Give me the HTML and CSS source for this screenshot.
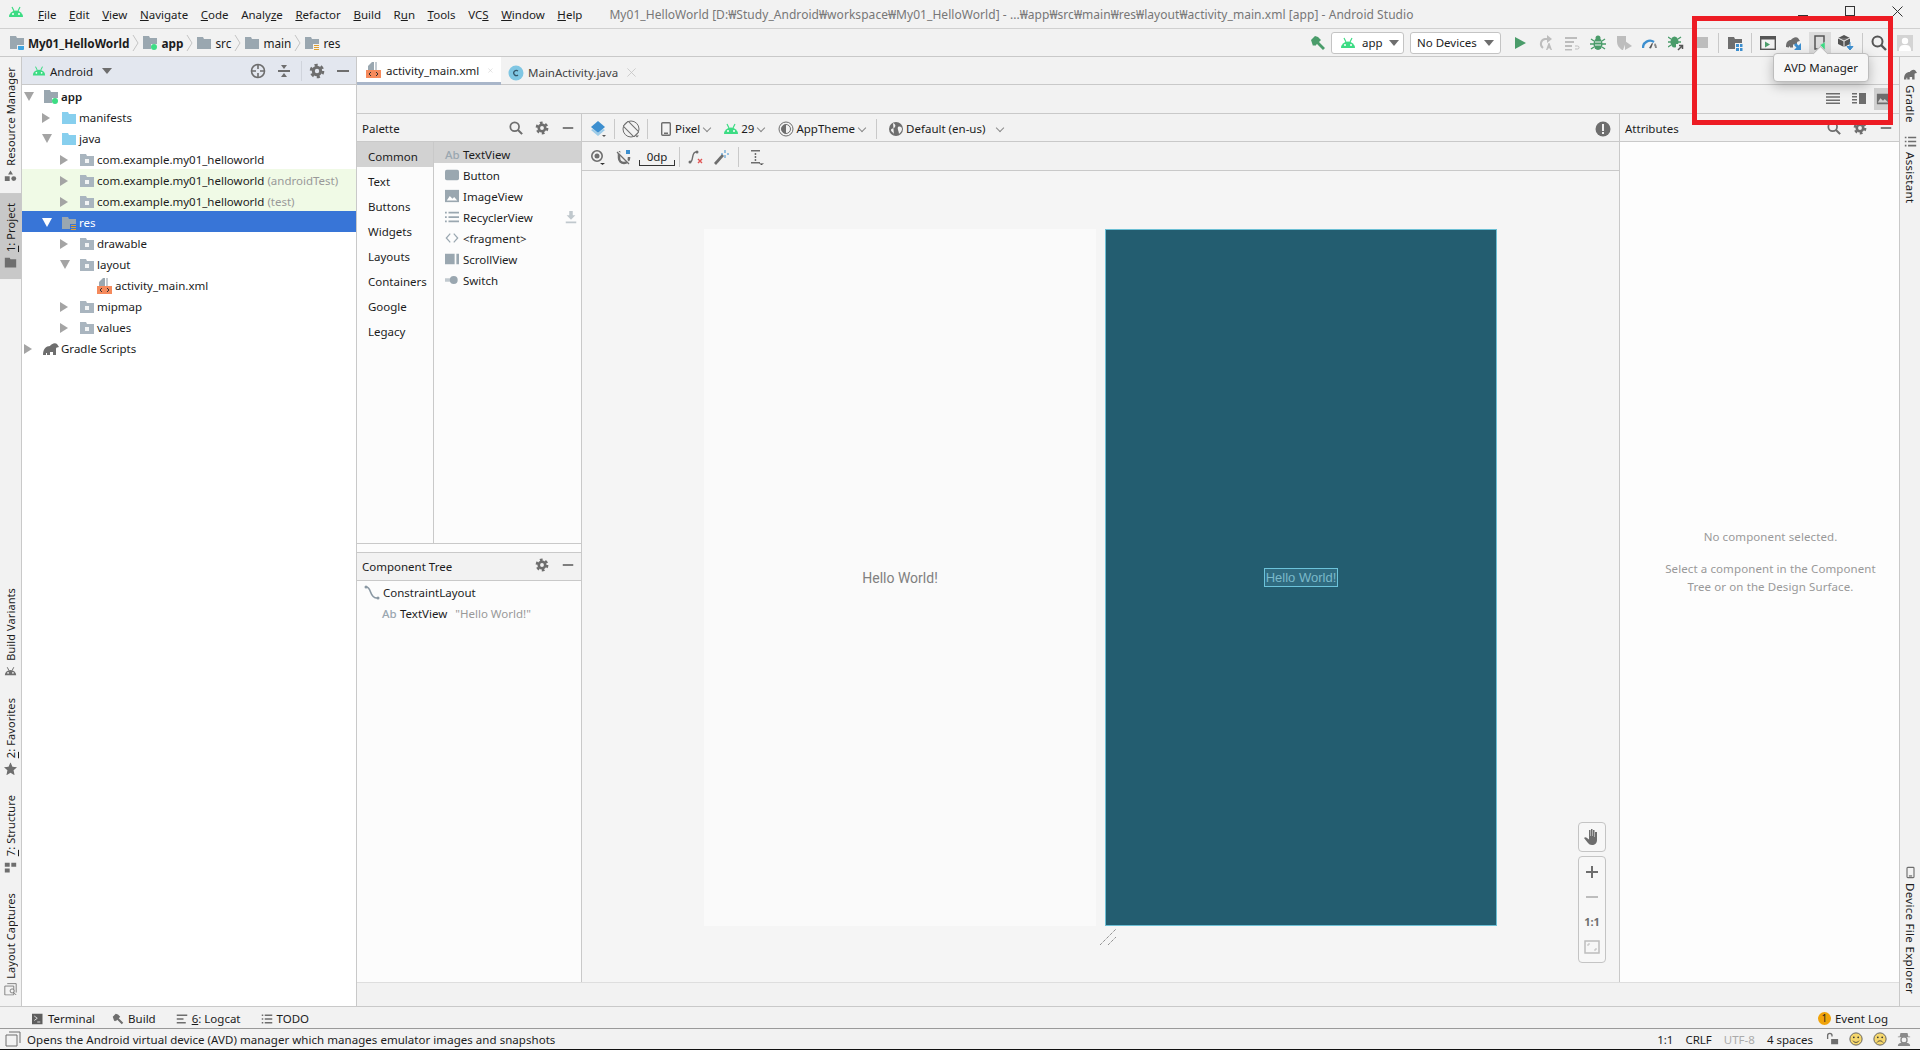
FILE: index.html
```html
<!doctype html>
<html lang="en">

<head>
    <meta charset="utf-8">
    <title>My01_HelloWorld - Android Studio</title>
    <link rel="stylesheet" href="styles.css">
</head>

<body>
    <svg class="defs" width="0" height="0">
        <symbol id="android" viewBox="0 0 16 16"><path d="M1 13a7 6.500 0 0 1 14 0z"/><path d="M4 3l2 4M12 3l-2 4" stroke="currentColor" stroke-width="1.200"/><circle cx="5" cy="10" r="1" fill="#fff"/><circle cx="11" cy="10" r="1" fill="#fff"/></symbol>
        <symbol id="folder" viewBox="0 0 16 16"><path d="M1 2h6l1 2h7v10H1z"/></symbol>
        <symbol id="module" viewBox="0 0 16 16"><path d="M1 1h6l1 2h7v6H9v5H1z" fill="#9aa7b0"/><circle cx="12" cy="12" r="3" fill="#3ddc84"/></symbol>
        <symbol id="module-blue" viewBox="0 0 16 16"><path d="M1 1h6l1 2h7v7H8v4H1z" fill="#9aa7b0"/><path d="M9 11h6v3a1 1 0 0 1-1 1h-4a1 1 0 0 1-1-1z" fill="#40a5e0"/></symbol>
        <symbol id="res-folder" viewBox="0 0 16 16"><path d="M1 2h6l1 2h7v5H9v5H1z" fill="#9aa7b0"/><path d="M10 10h5v1h-5zM10 12h5v1h-5zM10 14h5v1h-5z" fill="#e0a030"/></symbol>
        <symbol id="package" viewBox="0 0 16 16"><path d="M1 2h6l1 2h7v10H1z" fill="#a9b5bf"/><rect x="6" y="7" width="4" height="4" fill="#f2f4f5"/></symbol>
        <symbol id="xml" viewBox="0 0 16 16"><path d="M6 0h2v8H2V4z" fill="#9aa7b0"/><path d="M9 0h2v8H9z" fill="#c4cbd1"/><rect y="8" width="15" height="8" fill="#f58a5c"/><path d="M5 10l-2 2 2 2M10 10l2 2-2 2" stroke="#333" fill="none"/></symbol>
        <symbol id="class" viewBox="0 0 16 16"><circle cx="8" cy="8" r="7.500" fill="#7fc6e3"/><path d="M10 6a2.600 2.600 0 1 0 0 4" stroke="#33566b" stroke-width="1.200" fill="none"/></symbol>
        <symbol id="gradle" viewBox="0 0 16 16"><path d="M0 14c0-6 3-9 7-9 1-2 5-4 7-2l2 3-2 .5c-1 0-1 1-1 2v5.500h-3v-3H7v3H4v-2H3v2z"/></symbol>
        <symbol id="gear" viewBox="0 0 16 16"><circle cx="8" cy="8" r="3.700" fill="none" stroke="currentColor" stroke-width="3"/><circle cx="8" cy="8" r="6" fill="none" stroke="currentColor" stroke-width="2.600" stroke-dasharray="3.140 3.140"/></symbol>
        <symbol id="minus" viewBox="0 0 16 16"><rect x="2" y="7" width="12" height="2"/></symbol>
        <symbol id="search" viewBox="0 0 16 16"><circle cx="6.500" cy="6.500" r="5" fill="none" stroke="currentColor" stroke-width="2"/><path d="M10 10l5 5" stroke="currentColor" stroke-width="2.400"/></symbol>
        <symbol id="target" viewBox="0 0 16 16"><circle cx="8" cy="8" r="6.500" fill="none" stroke="currentColor" stroke-width="1.600"/><path d="M8 1v5M8 10v5M1 8h5M10 8h5" stroke="currentColor" stroke-width="1.600"/></symbol>
        <symbol id="collapse" viewBox="0 0 16 16"><path d="M2 7h12v2H2z"/><path d="M8 6L5 2h6zM8 10l3 4H5z"/></symbol>
        <symbol id="crumb" viewBox="0 0 7 16"><path d="M1 0l5 8-5 8" fill="none" stroke="#c4c4c4"/></symbol>
        <symbol id="cross" viewBox="0 0 11 11"><path d="M.5.5l10 10M10.500.5l-10 10" fill="none" stroke="currentColor"/></symbol>
        <symbol id="hammer" viewBox="0 0 16 16"><path d="M1 5l4-4 3 1 3 3-2 2 6 6-2 2-6-6-2 2-1-1-1 1z"/></symbol>
        <symbol id="run" viewBox="0 0 16 16"><path d="M3 2l11 6-11 6z"/></symbol>
        <symbol id="rerun" viewBox="0 0 16 16"><path d="M10 4H7a5 5 0 0 0-2 9" fill="none" stroke="currentColor" stroke-width="2"/><path d="M9 0l5 4-5 4z"/><path d="M8 15l2.500-7h1l2.500 7h-1.500l-.5-1.500h-2L9.500 15z"/></symbol>
        <symbol id="apply" viewBox="0 0 16 16"><path d="M1 2h12v2H1zM1 6h9v2H1zM1 10h7v2H1zM1 14h7v1.500H1z"/><path d="M11 11h2.500a1.500 1.500 0 0 1 0 3H11" fill="none" stroke="currentColor"/></symbol>
        <symbol id="bug" viewBox="0 0 16 16"><ellipse cx="8" cy="9" rx="4.500" ry="6"/><circle cx="8" cy="3" r="2.500"/><path d="M1 4l3 2M15 4l-3 2M0 9h4M16 9h-4M1 14l3-2M15 14l-3-2" stroke="currentColor" stroke-width="1.400"/><path d="M5 7h6M5 10h6" stroke="#f2f2f2"/></symbol>
        <symbol id="coverage" viewBox="0 0 16 16"><path d="M1 1h9v6l-3 8-1 0C3 13 1 10 1 7z"/><path d="M9 6l7 5-7 4z" fill="#bdbdbd"/></symbol>
        <symbol id="profiler" viewBox="0 0 16 16"><path d="M1 13a7 7 0 0 1 11-6" fill="none" stroke="#3d8fcf" stroke-width="2.400"/><path d="M7 13l3-5 1 .5-2 5z" fill="#555"/><path d="M13 8a7 7 0 0 1 2 5h-2a5 5 0 0 0-1-3z" fill="#888"/></symbol>
        <symbol id="attach" viewBox="0 0 16 16"><ellipse cx="6.500" cy="7" rx="4" ry="5.500" fill="#4a9c6a"/><path d="M0 2l3 2M13 2l-3 2M0 7h3M13 7h-3M0 12l3-2" stroke="#4a9c6a" stroke-width="1.400"/><path d="M8 9h8v7H8z" fill="#f2f2f2"/><path d="M10 15l4-4M11 10.500h3.500V14" stroke="#555" stroke-width="1.500" fill="none"/></symbol>
        <symbol id="structure" viewBox="0 0 16 16"><path d="M1 2h6l1 2h7v4H8v6H1z" fill="#6e6e6e"/><path d="M9 9h3v3H9zM13 9h2.500v3H13zM9 13h3v3H9zM13 13h2.500v3H13z" fill="#3d8fcf"/></symbol>
        <symbol id="terminal" viewBox="0 0 16 16"><rect x=".700" y="1.700" width="14.600" height="12.600" fill="none" stroke="#555" stroke-width="1.400"/><rect x="1" y="2" width="14" height="2.500" fill="#555"/><path d="M5 6.500l5 3-5 3z" fill="#4a9c6a"/></symbol>
        <symbol id="gradle-sync" viewBox="0 0 16 16"><path d="M0 12c0-5 2-7 5-7 1-2 5-4 7-2l2 3-2 .5c-1 0-1 1-1 2v1H7v3H4v-1H3v1z" fill="#6e6e6e"/><path d="M15 8v7H8l2.500-2.500L8 10l2-2 2.500 2.500z" fill="#3d8fcf"/></symbol>
        <symbol id="avd" viewBox="0 0 16 16"><path d="M3 1h9v13H3z" fill="none" stroke="#555" stroke-width="1.500"/><path d="M8 10l5-3 0 8z" fill="#3ddc84" stroke="#d2d2d2" stroke-width=".5"/></symbol>
        <symbol id="sdk" viewBox="0 0 16 16"><path d="M6 0l6 3v6l-6 3-6-3V3z" fill="#555"/><path d="M6 6v6M0 3l6 3 6-3" stroke="#f2f2f2"/><path d="M12 7v5M9 11.500l3 3.500 3-3.500z" fill="#3d8fcf" stroke="#3d8fcf"/></symbol>
        <symbol id="user" viewBox="0 0 16 16"><rect width="16" height="16" fill="#d4d4d4"/><circle cx="8" cy="6" r="3.200" fill="#fff"/><path d="M2 16c0-5 2-6 6-6s6 1 6 6z" fill="#fff"/></symbol>
        <symbol id="list" viewBox="0 0 16 16"><path d="M1 2h14v1.500H1zM1 5.200h14v1.500H1zM1 8.400h14v1.500H1zM1 11.600h14v1.500H1z"/></symbol>
        <symbol id="split" viewBox="0 0 16 16"><path d="M1 2h5v1.500H1zM1 5h5v1.500H1zM1 8h5v1.500H1zM1 11h5v1.500H1zM8 2h7v11H8z"/></symbol>
        <symbol id="picture" viewBox="0 0 16 16"><path d="M1 2h14v12H1z"/><path d="M2 12l3-5 3 3 2-2 4 4z" fill="#d0d0d0"/></symbol>
        <symbol id="button-w" viewBox="0 0 16 16"><rect y="2" width="16" height="12" rx="2"/></symbol>
        <symbol id="image-w" viewBox="0 0 16 16"><rect y="1" width="16" height="14"/><path d="M2 13l3.500-5 3 3 2-2 3.500 4z" fill="#fff"/></symbol>
        <symbol id="recycler" viewBox="0 0 16 16"><path d="M0 2h2v2H0zM4 2h12v2H4zM0 7h2v2H0zM4 7h12v2H4zM0 12h2v2H0zM4 12h12v2H4z"/></symbol>
        <symbol id="code" viewBox="0 0 16 16"><path d="M6 3L1.500 8 6 13M10 3l4.500 5-4.500 5" fill="none" stroke="currentColor" stroke-width="1.400"/></symbol>
        <symbol id="scroll" viewBox="0 0 16 16"><path d="M0 2h11v12H0zM13 2h3v12h-3z"/></symbol>
        <symbol id="switch" viewBox="0 0 16 16"><path d="M0 6h7v4H0z" opacity=".6"/><circle cx="10" cy="8" r="4.500"/></symbol>
        <symbol id="download" viewBox="0 0 16 16"><path d="M6 1h4v5h3l-5 5-5-5h3zM2 13h12v2H2z"/></symbol>
        <symbol id="layers" viewBox="0 0 16 16"><path d="M8 0l7 6-7 6-7-6z" fill="#3d8fcf"/><path d="M1 9l7 6 7-6-2-1-5 4-5-4z" fill="#9ccbe8"/><path d="M12 14h4l-2 2z" fill="#555"/></symbol>
        <symbol id="rotate" viewBox="0 0 18 18"><circle cx="9" cy="9" r="8" fill="none" stroke="currentColor"/><rect x="5.500" y="1.500" width="7" height="15" rx="1" fill="#f2f2f2" stroke="currentColor" transform="rotate(-45 9 9)"/><path d="M13 15.500h4l-2 2z"/></symbol>
        <symbol id="phone" viewBox="0 0 16 16"><rect x="3.700" y="1.700" width="8.600" height="12.600" rx="1" fill="none" stroke="currentColor" stroke-width="1.400"/><rect x="6" y="11.500" width="4" height="1.500"/></symbol>
        <symbol id="theme" viewBox="0 0 16 16"><circle cx="8" cy="8" r="7" fill="none" stroke="currentColor"/><circle cx="8" cy="8" r="4.500" fill="none" stroke="currentColor"/><path d="M8 3.500a4.500 4.500 0 0 0 0 9z"/></symbol>
        <symbol id="globe" viewBox="0 0 16 16"><circle cx="8" cy="8" r="7"/><path d="M5 2c2 1 3 2 2 4S3 7 3 9s3 2 3 5M10 6c2-1 4 0 4 2s-2 4-3 5c0-3-2-5-1-7z" fill="#f2f2f2"/></symbol>
        <symbol id="warn" viewBox="0 0 16 16"><circle cx="8" cy="8" r="7.500"/><rect x="7" y="3" width="2" height="7" fill="#f2f2f2"/><rect x="7" y="11" width="2" height="2" fill="#f2f2f2"/></symbol>
        <symbol id="eye" viewBox="0 0 16 16"><circle cx="7" cy="7" r="5.200" fill="none" stroke="currentColor" stroke-width="1.600"/><circle cx="7" cy="7" r="2.500"/><path d="M10 14h5l-2.500 2z" fill="#333"/></symbol>
        <symbol id="magnet" viewBox="0 0 16 16"><path d="M3 2v7a5 5 0 0 0 10 0V8" fill="none" stroke="currentColor" stroke-width="2.500"/><rect x="10" y="1" width="4" height="4" fill="#3d8fcf"/><path d="M1 2l13 13" stroke="#f2f2f2" stroke-width="2"/><path d="M1 3l12 12" stroke="currentColor" stroke-width="1.200"/></symbol>
        <symbol id="constraint" viewBox="0 0 16 16"><path d="M3 13c4 0 1-10 6-10" fill="none" stroke="currentColor" stroke-width="1.400"/><circle cx="3" cy="13" r="1.500"/><circle cx="10" cy="3" r="1.500"/><path d="M11 10l4 4M15 10l-4 4" stroke="#e05555" stroke-width="1.400"/></symbol>
        <symbol id="constraint-layout" viewBox="0 0 16 16"><path d="M2 2c6 0 3 11 11 11" fill="none" stroke="currentColor" stroke-width="1.600"/><circle cx="2" cy="2" r="1.500"/><circle cx="14" cy="13" r="1.500"/></symbol>
        <symbol id="wand" viewBox="0 0 16 16"><path d="M1 14l8-9 2 2-8 9z"/><path d="M12 1v3M12 6v3M8 5h2M14 5h2" stroke="#3d8fcf"/></symbol>
        <symbol id="guide" viewBox="0 0 16 16"><path d="M2 1h9v1.500H2zM5.700 4h1.500v2H5.700zM5.700 7h1.500v2H5.700zM5.700 10h1.500v2H5.700zM2 13h9v1.500H2z"/><path d="M10 14.500h5l-2.500 1.500z" fill="#333"/></symbol>
        <symbol id="resource" viewBox="0 0 16 16"><path d="M8 1l3 5H5zM1 8h6v6H1z"/><circle cx="12" cy="11" r="3"/></symbol>
        <symbol id="star" viewBox="0 0 16 16"><path d="M8 0l2.400 5.400 5.600.6-4.200 3.800L13 16l-5-3-5 3 1.200-6.200L0 6l5.600-.6z"/></symbol>
        <symbol id="blocks" viewBox="0 0 16 16"><path d="M1 3h6v5H1zM9 3h6v5H9zM1 10h6v5H1z"/></symbol>
        <symbol id="capture" viewBox="0 0 16 16"><path d="M4 1h11v11M1 4h11v11H1z" fill="none" stroke="currentColor"/><circle cx="10" cy="10" r="2.500" fill="#f2f2f2" stroke="currentColor"/><path d="M12 12l3 3" stroke="currentColor"/></symbol>
        <symbol id="tool-term" viewBox="0 0 16 16"><rect y="1" width="14" height="14" fill="#5e5e5e"/><path d="M3 4l4 3-4 3M7 12h4" stroke="#fff" fill="none"/></symbol>
        <symbol id="logcat" viewBox="0 0 16 16"><path d="M1 2h14v2H1zM1 7h9v2H1zM1 12h12v2H1z"/></symbol>
        <symbol id="todo" viewBox="0 0 16 16"><path d="M1 2h2v2H1zM5 2h10v2H5zM1 7h2v2H1zM5 7h10v2H5zM1 12h2v2H1zM5 12h10v2H5z"/></symbol>
        <symbol id="window" viewBox="0 0 16 16"><path d="M4 1h11v11M1 4h11v11H1z" fill="none" stroke="currentColor"/></symbol>
        <symbol id="lock" viewBox="0 0 16 16"><rect x="7" y="8" width="8" height="6"/><path d="M3 8V4a2.500 2.500 0 0 1 5 0v1" fill="none" stroke="currentColor" stroke-width="1.500"/></symbol>
        <symbol id="smile" viewBox="0 0 16 16"><circle cx="8" cy="8" r="7" fill="#f5d76e" stroke="#555"/><circle cx="5.500" cy="6" r="1" fill="#333"/><circle cx="10.500" cy="6" r="1" fill="#333"/><path d="M4.500 10c2 2.500 5 2.500 7 0" fill="none" stroke="#333"/></symbol>
        <symbol id="sad" viewBox="0 0 16 16"><circle cx="8" cy="8" r="7" fill="#f5d76e" stroke="#555"/><circle cx="5.500" cy="6" r="1" fill="#333"/><circle cx="10.500" cy="6" r="1" fill="#333"/><path d="M4.500 12c2-2.500 5-2.500 7 0" fill="none" stroke="#333"/></symbol>
        <symbol id="hector" viewBox="0 0 16 16"><path d="M4 1h8l1 4h2v1H1V5h2z"/><circle cx="8" cy="9" r="3.500" fill="none" stroke="currentColor" stroke-width="1.500"/><path d="M1 16c0-3 3-4 7-4s7 1 7 4z"/></symbol>
        <symbol id="hand" viewBox="0 0 16 16"><path d="M5 1h1.500v6H7V0h1.500v7H9V1h1.500v7h.5V3h2v8c0 3-2 5-5 5-2 0-3-1-4-2L0 9c1-1 2-1 3 0l2 1.500z"/></symbol>
        <symbol id="plus" viewBox="0 0 16 16"><path d="M7 2h2v5h5v2H9v5H7V9H2V7h5z"/></symbol>
        <symbol id="fit" viewBox="0 0 16 16"><rect x="1" y="2" width="14" height="12" fill="none" stroke="currentColor" stroke-width="1.500"/><path d="M4 7V5h2M12 9v2h-2" fill="none" stroke="currentColor"/></symbol>
    </svg>

    <div class="app">
        <!-- title bar -->
        <div class="titlebar">
            <svg class="ic logo"><use href="#android"/></svg>
            <div class="menu">
                <span><u>F</u>ile</span><span><u>E</u>dit</span><span><u>V</u>iew</span><span><u>N</u>avigate</span><span><u>C</u>ode</span><span>Analy<u>z</u>e</span><span><u>R</u>efactor</span><span><u>B</u>uild</span><span>R<u>u</u>n</span><span><u>T</u>ools</span><span>VC<u>S</u></span><span><u>W</u>indow</span><span><u>H</u>elp</span>
            </div>
            <div class="wintitle">My01_HelloWorld [D:₩Study_Android₩workspace₩My01_HelloWorld] - ...₩app₩src₩main₩res₩layout₩activity_main.xml [app] - Android Studio</div>
            <div class="winctl">
                <span class="win-min"></span>
                <span class="win-max"></span>
                <svg class="win-close"><use href="#cross"/></svg>
            </div>
        </div>

        <!-- breadcrumbs + main toolbar -->
        <div class="navbar">
            <div class="crumbs">
                <svg class="ic"><use href="#module-blue"/></svg><b>My01_HelloWorld</b><svg class="crumb-sep"><use href="#crumb"/></svg>
                <svg class="ic"><use href="#module"/></svg><b>app</b><svg class="crumb-sep"><use href="#crumb"/></svg>
                <svg class="ic c-folder"><use href="#folder"/></svg><span>src</span><svg class="crumb-sep"><use href="#crumb"/></svg>
                <svg class="ic c-folder"><use href="#folder"/></svg><span>main</span><svg class="crumb-sep"><use href="#crumb"/></svg>
                <svg class="ic"><use href="#res-folder"/></svg><span>res</span>
            </div>
            <div class="tools">
                <div class="tb c-green"><svg class="ic"><use href="#hammer"/></svg></div>
                <div class="combo combo-app"><svg class="ic c-android"><use href="#android"/></svg><span>app</span><i class="caret"></i></div>
                <div class="combo combo-dev"><span>No Devices</span><i class="caret"></i></div>
                <div class="tb c-green"><svg class="ic"><use href="#run"/></svg></div>
                <div class="tb c-off"><svg class="ic"><use href="#rerun"/></svg></div>
                <div class="tb c-off"><svg class="ic"><use href="#apply"/></svg></div>
                <div class="tb c-green"><svg class="ic"><use href="#bug"/></svg></div>
                <div class="tb c-off"><svg class="ic"><use href="#coverage"/></svg></div>
                <div class="tb"><svg class="ic"><use href="#profiler"/></svg></div>
                <div class="tb"><svg class="ic"><use href="#attach"/></svg></div>
                <div class="tb"><i class="stop"></i></div>
                <i class="vsep"></i>
                <div class="tb"><svg class="ic"><use href="#structure"/></svg></div>
                <i class="vsep"></i>
                <div class="tb"><svg class="ic"><use href="#terminal"/></svg></div>
                <div class="tb"><svg class="ic"><use href="#gradle-sync"/></svg></div>
                <div class="tb tb-on"><svg class="ic"><use href="#avd"/></svg></div>
                <div class="tb"><svg class="ic"><use href="#sdk"/></svg></div>
                <i class="vsep"></i>
                <div class="tb c-dark"><svg class="ic"><use href="#search"/></svg></div>
                <div class="tb"><svg class="ic"><use href="#user"/></svg></div>
            </div>
        </div>

        <div class="workbench">
            <!-- left tool window stripe -->
            <div class="stripe stripe-left">
                <div class="stripe-group">
                    <div class="sbtn"><svg class="ic"><use href="#resource"/></svg><span>Resource Manager</span></div>
                    <div class="sbtn sbtn-on"><svg class="ic"><use href="#folder"/></svg><span><u>1</u>: Project</span></div>
                </div>
                <div class="stripe-group">
                    <div class="sbtn"><svg class="ic"><use href="#android"/></svg><span>Build Variants</span></div>
                    <div class="sbtn"><svg class="ic"><use href="#star"/></svg><span><u>2</u>: Favorites</span></div>
                    <div class="sbtn"><svg class="ic"><use href="#blocks"/></svg><span><u>7</u>: Structure</span></div>
                    <div class="sbtn"><svg class="ic"><use href="#capture"/></svg><span>Layout Captures</span></div>
                </div>
            </div>

            <!-- project tree -->
            <div class="project">
                <div class="project-head">
                    <svg class="ic c-android"><use href="#android"/></svg>
                    <span class="project-view">Android</span>
                    <i class="caret"></i>
                    <div class="head-icons">
                        <svg class="ic"><use href="#target"/></svg>
                        <svg class="ic"><use href="#collapse"/></svg>
                        <i class="head-sep"></i>
                        <svg class="ic"><use href="#gear"/></svg>
                        <svg class="ic"><use href="#minus"/></svg>
                    </div>
                </div>
                <div class="tree">
                    <div class="row d0"><i class="tw open"></i><svg class="ic"><use href="#module"/></svg><b>app</b></div>
                    <div class="row d1"><i class="tw"></i><svg class="ic c-src"><use href="#folder"/></svg>manifests</div>
                    <div class="row d1"><i class="tw open"></i><svg class="ic c-src"><use href="#folder"/></svg>java</div>
                    <div class="row d2"><i class="tw"></i><svg class="ic"><use href="#package"/></svg>com.example.my01_helloworld</div>
                    <div class="row d2 row-test"><i class="tw"></i><svg class="ic"><use href="#package"/></svg>com.example.my01_helloworld <em>(androidTest)</em></div>
                    <div class="row d2 row-test"><i class="tw"></i><svg class="ic"><use href="#package"/></svg>com.example.my01_helloworld <em>(test)</em></div>
                    <div class="row d1 row-sel"><i class="tw open"></i><svg class="ic"><use href="#res-folder"/></svg>res</div>
                    <div class="row d2"><i class="tw"></i><svg class="ic"><use href="#package"/></svg>drawable</div>
                    <div class="row d2"><i class="tw open"></i><svg class="ic"><use href="#package"/></svg>layout</div>
                    <div class="row d3"><i class="tw none"></i><svg class="ic"><use href="#xml"/></svg>activity_main.xml</div>
                    <div class="row d2"><i class="tw"></i><svg class="ic"><use href="#package"/></svg>mipmap</div>
                    <div class="row d2"><i class="tw"></i><svg class="ic"><use href="#package"/></svg>values</div>
                    <div class="row d0"><i class="tw"></i><svg class="ic c-gradle"><use href="#gradle"/></svg>Gradle Scripts</div>
                </div>
            </div>

            <!-- editor -->
            <div class="editor">
                <div class="tabs">
                    <div class="tab tab-on"><svg class="ic"><use href="#xml"/></svg><span>activity_main.xml</span><svg class="tab-x"><use href="#cross"/></svg></div>
                    <div class="tab"><svg class="ic"><use href="#class"/></svg><span>MainActivity.java</span><svg class="tab-x"><use href="#cross"/></svg></div>
                </div>
                <div class="viewbar">
                    <div class="vb"><svg class="ic"><use href="#list"/></svg></div>
                    <div class="vb"><svg class="ic"><use href="#split"/></svg></div>
                    <div class="vb vb-on"><svg class="ic"><use href="#picture"/></svg></div>
                </div>

                <div class="designer">
                    <!-- palette and component tree -->
                    <div class="sidecol">
                        <div class="palette">
                            <div class="panel-head">
                                <span>Palette</span>
                                <div class="head-icons">
                                    <svg class="ic"><use href="#search"/></svg>
                                    <svg class="ic"><use href="#gear"/></svg>
                                    <svg class="ic"><use href="#minus"/></svg>
                                </div>
                            </div>
                            <div class="palette-body">
                                <div class="cats">
                                    <div class="cat cat-on">Common</div>
                                    <div class="cat">Text</div>
                                    <div class="cat">Buttons</div>
                                    <div class="cat">Widgets</div>
                                    <div class="cat">Layouts</div>
                                    <div class="cat">Containers</div>
                                    <div class="cat">Google</div>
                                    <div class="cat">Legacy</div>
                                </div>
                                <div class="widgets">
                                    <div class="wg wg-on"><span class="ab">Ab</span>TextView</div>
                                    <div class="wg"><svg class="ic"><use href="#button-w"/></svg>Button</div>
                                    <div class="wg"><svg class="ic"><use href="#image-w"/></svg>ImageView</div>
                                    <div class="wg"><svg class="ic"><use href="#recycler"/></svg>RecyclerView<svg class="ic wg-dl"><use href="#download"/></svg></div>
                                    <div class="wg"><svg class="ic"><use href="#code"/></svg>&lt;fragment&gt;</div>
                                    <div class="wg"><svg class="ic"><use href="#scroll"/></svg>ScrollView</div>
                                    <div class="wg"><svg class="ic"><use href="#switch"/></svg>Switch</div>
                                </div>
                            </div>
                        </div>
                        <div class="comptree">
                            <div class="panel-head">
                                <span>Component Tree</span>
                                <div class="head-icons">
                                    <svg class="ic"><use href="#gear"/></svg>
                                    <svg class="ic"><use href="#minus"/></svg>
                                </div>
                            </div>
                            <div class="comp-body">
                                <div class="comp comp-root"><svg class="ic"><use href="#constraint-layout"/></svg>ConstraintLayout</div>
                                <div class="comp comp-child"><span class="ab">Ab</span>TextView<em>"Hello World!"</em></div>
                            </div>
                        </div>
                    </div>

                    <!-- design surface -->
                    <div class="main">
                        <div class="main-tb">
                            <svg class="ic m-layers"><use href="#layers"/></svg>
                            <i class="tb-sep"></i>
                            <svg class="ic m-rotate"><use href="#rotate"/></svg>
                            <i class="tb-sep"></i>
                            <svg class="ic m-phone"><use href="#phone"/></svg><span class="m-txt">Pixel</span><i class="chev"></i>
                            <svg class="ic c-android m-api"><use href="#android"/></svg><span class="m-txt">29</span><i class="chev"></i>
                            <svg class="ic m-theme"><use href="#theme"/></svg><span class="m-txt">AppTheme</span><i class="chev"></i>
                            <i class="tb-sep m-sep-tight"></i>
                            <svg class="ic m-globe"><use href="#globe"/></svg><span class="m-txt">Default (en-us)</span><i class="chev chev-far"></i>
                            <svg class="ic m-warn"><use href="#warn"/></svg>
                        </div>
                        <div class="main-tb main-tb2">
                            <svg class="ic"><use href="#eye"/></svg>
                            <svg class="ic"><use href="#magnet"/></svg>
                            <span class="margin-box">0dp</span>
                            <i class="tb-sep"></i>
                            <svg class="ic"><use href="#constraint"/></svg>
                            <svg class="ic"><use href="#wand"/></svg>
                            <i class="tb-sep"></i>
                            <svg class="ic m-guide"><use href="#guide"/></svg>
                        </div>
                        <div class="canvas">
                            <div class="surface">Hello World!</div>
                            <div class="surface blueprint">
                                <span class="bp-text">Hello World!</span>
                                <svg class="resize" width="18" height="18"><path d="M1 17L17 1M9 17l8-8" stroke="#666" stroke-dasharray="1 1"/></svg>
                            </div>
                            <div class="zoomctl">
                                <div class="zoombox zoombox-hand"><svg class="ic"><use href="#hand"/></svg></div>
                                <div class="zoombox">
                                    <svg class="ic"><use href="#plus"/></svg>
                                    <svg class="ic c-off"><use href="#minus"/></svg>
                                    <span class="one">1:1</span>
                                    <svg class="ic c-off"><use href="#fit"/></svg>
                                </div>
                            </div>
                        </div>
                    </div>

                    <!-- attributes -->
                    <div class="attrs">
                        <div class="panel-head">
                            <span>Attributes</span>
                            <div class="head-icons">
                                <svg class="ic"><use href="#search"/></svg>
                                <svg class="ic"><use href="#gear"/></svg>
                                <svg class="ic"><use href="#minus"/></svg>
                            </div>
                        </div>
                        <div class="attrs-empty">
                            <p>No component selected.</p>
                            <p>Select a component in the Component<br>Tree or on the Design Surface.</p>
                        </div>
                    </div>
                </div>
                <div class="hstrip"></div>
            </div>

            <!-- right tool window stripe -->
            <div class="stripe stripe-right">
                <div class="stripe-group">
                    <div class="sbtn"><svg class="ic"><use href="#gradle"/></svg><span>Gradle</span></div>
                    <div class="sbtn"><svg class="ic"><use href="#todo"/></svg><span>Assistant</span></div>
                </div>
                <div class="stripe-group">
                    <div class="sbtn"><svg class="ic"><use href="#phone"/></svg><span>Device File Explorer</span></div>
                </div>
            </div>
        </div>

        <!-- tool window buttons -->
        <div class="toolbar-bottom">
            <div class="tw-btn tw-first"><svg class="ic"><use href="#tool-term"/></svg>Terminal</div>
            <div class="tw-btn"><svg class="ic"><use href="#hammer"/></svg>Build</div>
            <div class="tw-btn"><svg class="ic"><use href="#logcat"/></svg><span><u>6</u>: Logcat</span></div>
            <div class="tw-btn"><svg class="ic"><use href="#todo"/></svg>TODO</div>
            <div class="tw-btn event"><i class="badge">1</i>Event Log</div>
        </div>

        <!-- status bar -->
        <div class="statusbar">
            <svg class="ic"><use href="#window"/></svg>
            <span class="status-msg">Opens the Android virtual device (AVD) manager which manages emulator images and snapshots</span>
            <div class="status-right">
                <span>1:1</span>
                <span>CRLF</span>
                <span class="off">UTF-8</span>
                <span>4 spaces</span>
                <svg class="ic"><use href="#lock"/></svg>
                <svg class="ic"><use href="#smile"/></svg>
                <svg class="ic"><use href="#sad"/></svg>
                <svg class="ic c-off2"><use href="#hector"/></svg>
            </div>
        </div>

        <div class="tooltip">AVD Manager</div>
        <div class="redbox"></div>
    </div>
</body>

</html>
```
FILE: styles.css
```css
* {
    box-sizing: border-box;
}

html,
body {
    margin: 0;
    height: 100%;
    overflow: hidden;
}

body {
    font-family: "Noto Sans", "Open Sans", sans-serif;
    font-size: 11.5px;
    color: #1c1c1c;
    background: #f2f2f2;
}

.defs {
    position: absolute;
}

.ic {
    width: 16px;
    height: 16px;
    flex: none;
    fill: currentColor;
    color: #6e6e6e;
}

i {
    font-style: normal;
}

u {
    text-underline-offset: 1px;
}

.app {
    position: relative;
    width: 1920px;
    height: 1050px;
    display: flex;
    flex-direction: column;
}

/* colours */
.c-folder {
    color: #9aa7b0;
}

.c-src {
    color: #87cfee;
}

.c-android {
    color: #3ddc84;
}

.c-green .ic {
    color: #4a9c6a;
}

.c-off .ic,
.ic.c-off {
    color: #bdbdbd;
}

.c-dark .ic {
    color: #555;
}

.c-gradle {
    color: #6e6e6e;
}

.c-off2 {
    color: #8a8a8a;
}

/* title bar */
.titlebar {
    height: 29px;
    flex: none;
    display: flex;
    align-items: center;
    border-bottom: 1px solid #d0d0d0;
    padding-left: 8px;
}

.logo {
    color: #3ddc84;
    margin-top: -4px;
}

.menu {
    display: flex;
    gap: 12.6px;
    margin-left: 14px;
}

.wintitle {
    margin-left: 27px;
    font-size: 12px;
    letter-spacing: .05px;
    color: #777;
    white-space: nowrap;
}

.winctl {
    margin-left: auto;
    display: flex;
    align-items: center;
}

.win-min {
    width: 10px;
    height: 1px;
    background: #333;
    margin-right: 37px;
    margin-top: 2px;
}

.win-max {
    width: 10px;
    height: 10px;
    border: 1px solid #333;
    margin-right: 37px;
    margin-top: -6px;
}

.win-close {
    width: 11px;
    height: 11px;
    margin-right: 17px;
    margin-top: -5px;
    color: #333;
}

/* nav bar */
.navbar {
    height: 28px;
    flex: none;
    display: flex;
    align-items: center;
    justify-content: space-between;
    border-bottom: 1px solid #c9c9c9;
    padding: 0 2px 0 9px;
}

.crumbs {
    display: flex;
    align-items: center;
    gap: 3px;
    padding-top: 1px;
    font-size: 11.8px;
}

.crumb-sep {
    width: 7px;
    height: 16px;
    flex: none;
}

.tools {
    display: flex;
    align-items: center;
}

.tb {
    position: relative;
    width: 26px;
    height: 22px;
    display: flex;
    align-items: center;
    justify-content: center;
}

.tb-on::before {
    content: "";
    position: absolute;
    left: 2px;
    right: 2px;
    top: 0;
    bottom: 0;
    background: #dcdcdc;
}

.tb-on .ic {
    position: relative;
}

.stop {
    width: 11px;
    height: 11px;
    background: #bdbdbd;
}

.vsep {
    width: 7px;
    height: 20px;
    background: linear-gradient(#c9c9c9, #c9c9c9) center / 1px 100% no-repeat;
}

.combo {
    height: 22px;
    display: flex;
    align-items: center;
    margin-right: 6px;
    padding: 0 6px;
    background: #fff;
    border: 1px solid #c4c4c4;
    border-radius: 3px;
}

.combo-app {
    width: 73px;
    gap: 6px;
    padding-left: 8px;
}

.combo-dev {
    width: 91px;
}

.combo .caret {
    margin-left: auto;
}

.caret {
    width: 0;
    height: 0;
    border-left: 5px solid transparent;
    border-right: 5px solid transparent;
    border-top: 6px solid #6e6e6e;
}

/* workbench */
.workbench {
    flex: 1;
    min-height: 0;
    display: flex;
    border-bottom: 1px solid #c9c9c9;
}

.stripe {
    width: 22px;
    flex: none;
    display: flex;
    flex-direction: column;
    justify-content: space-between;
    background: #f2f2f2;
}

.stripe-left {
    border-right: 1px solid #c9c9c9;
}

.stripe-right {
    width: 21px;
    border-left: 1px solid #c9c9c9;
}

.stripe-group {
    display: flex;
    flex-direction: column;
}

.sbtn {
    display: flex;
    align-items: center;
    gap: 4px;
    writing-mode: vertical-rl;
    padding: 10px 0;
    font-size: 11px;
    letter-spacing: .1px;
    white-space: nowrap;
}

.sbtn .ic {
    width: 13px;
    height: 13px;
}

.stripe-left .sbtn {
    transform: rotate(180deg);
}

.stripe-left .sbtn .ic {
    transform: rotate(180deg);
}

.stripe-right .stripe-group {
    padding: 5px 0 6px;
}

.stripe-right .sbtn {
    padding: 6px 0;
    font-size: 11.5px;
    letter-spacing: .3px;
}

.sbtn-on {
    background: #c8c8c8;
}

/* project tree */
.project {
    width: 335px;
    flex: none;
    display: flex;
    flex-direction: column;
    background: #fff;
    border-right: 1px solid #c9c9c9;
}

.project-head {
    height: 28px;
    flex: none;
    display: flex;
    align-items: center;
    padding-left: 10px;
    background: #e3e7ef;
    border-bottom: 1px solid #c9c9c9;
}

.project-head > .ic {
    width: 14px;
    height: 14px;
}

.project-view {
    margin: 2px 9px 0 4px;
}

.head-icons {
    margin-left: auto;
    display: flex;
    align-items: center;
    gap: 10px;
    padding-right: 5px;
}

.head-sep {
    width: 1px;
    height: 20px;
    background: #d0d4dc;
    margin: 0 -3px 0 -1px;
}

.row {
    height: 21px;
    display: flex;
    align-items: center;
    padding-top: 2px;
    white-space: pre;
}

.row em,
.comp em {
    font-style: normal;
    color: #999;
}

.row .ic {
    margin-right: 2px;
}

.row b {
    font-weight: 600;
}

.d0 {
    padding-left: 2px;
}

.d1 {
    padding-left: 20px;
}

.d2 {
    padding-left: 38px;
}

.d3 {
    padding-left: 56px;
}

.tw {
    width: 19px;
    flex: none;
    height: 0;
    border-left: 8px solid #a4a4a4;
    border-top: 5px solid transparent;
    border-bottom: 5px solid transparent;
    border-right: 11px solid transparent;
}

.tw.open {
    border-left: 5px solid transparent;
    border-right: 5px solid transparent;
    border-top: 9px solid #a4a4a4;
    border-bottom: 0;
    width: 10px;
    margin-right: 9px;
}

.tw.none {
    border: 0;
}

.row-test {
    background: #f0fae6;
}

.row-sel {
    background: #3875d7;
    color: #fff;
}

.row-sel .tw.open {
    border-top-color: #fff;
}

/* editor */
.editor {
    flex: 1;
    min-width: 0;
    display: flex;
    flex-direction: column;
}

.tabs {
    height: 28px;
    flex: none;
    display: flex;
    border-bottom: 1px solid #c9c9c9;
}

.tab {
    height: 28px;
    display: flex;
    align-items: center;
    gap: 4px;
    padding: 3px 8px 0 7px;
}

.tab-on {
    width: 144px;
    padding: 1px 8px 0 9px;
    background: #fff;
    border-bottom: 3px solid #a9b6c9;
}

.tab span {
    color: #444;
}

.tab-on span {
    color: #1c1c1c;
}

.tab-x {
    width: 9px;
    height: 9px;
    margin-left: 5px;
    color: #c4c4c4;
}

.viewbar {
    height: 29px;
    flex: none;
    display: flex;
    align-items: center;
    justify-content: flex-end;
    gap: 4px;
    padding-right: 7px;
    border-bottom: 1px solid #c9c9c9;
}

.vb {
    width: 22px;
    height: 22px;
    display: flex;
    align-items: center;
    justify-content: center;
}

.vb-on {
    width: 18px;
    background: #d0d0d0;
}

.vb-on .ic {
    width: 14px;
}

.designer {
    flex: 1;
    min-height: 0;
    display: flex;
    border-bottom: 1px solid #dedede;
}

.panel-head {
    height: 28px;
    flex: none;
    display: flex;
    align-items: center;
    padding-left: 5px;
    background: #f2f2f2;
    border-bottom: 1px solid #c9c9c9;
}

.panel-head > span {
    padding-top: 2px;
}

.panel-head .ic {
    width: 14px;
    height: 14px;
}

.panel-head .head-icons {
    gap: 12px;
    padding-right: 6px;
}

.comptree .panel-head > span {
    padding-top: 0;
}

.comptree .head-icons {
    margin-bottom: 3px;
}

.sidecol {
    width: 225px;
    flex: none;
    display: flex;
    flex-direction: column;
    background: #fcfcfc;
    border-right: 1px solid #c9c9c9;
}

.palette {
    height: 430px;
    flex: none;
    display: flex;
    flex-direction: column;
    border-bottom: 1px solid #c9c9c9;
}

.palette-body {
    flex: 1;
    display: flex;
}

.cats {
    width: 77px;
    flex: none;
    border-right: 1px solid #c9c9c9;
}

.cat {
    height: 25px;
    display: flex;
    align-items: center;
    padding: 4px 0 0 11px;
}

.cat-on {
    background: #d2d2d2;
}

.widgets {
    flex: 1;
}

.wg {
    height: 21px;
    display: flex;
    align-items: center;
    padding: 3px 0 0 11px;
}

.wg .ic {
    width: 14px;
    height: 14px;
    margin-right: 4px;
    color: #9aa7b0;
}

.wg-on {
    background: #d2d2d2;
}

.ab {
    width: 18px;
    flex: none;
    color: #9aa7b0;
    font-weight: 500;
}

.ic.wg-dl {
    margin: 0 3px 0 auto;
    color: #c0c8cd;
}

.comptree {
    flex: 1;
    margin-top: 8px;
    display: flex;
    flex-direction: column;
    border-top: 1px solid #c9c9c9;
}

.comp {
    height: 21px;
    display: flex;
    align-items: center;
}

.comp-body {
    padding-top: 1px;
}

.comp-root {
    padding-left: 7px;
}

.comp-root .ic {
    color: #8a98a3;
    margin-right: 3px;
}

.comp-child {
    padding-left: 25px;
}

.comp-child em {
    margin-left: 8px;
}

.main {
    flex: 1;
    min-width: 0;
    display: flex;
    flex-direction: column;
}

.main-tb {
    height: 28px;
    flex: none;
    display: flex;
    align-items: center;
    padding: 2px 0 0 8px;
    border-bottom: 1px solid #c9c9c9;
}

.tb-sep {
    width: 1px;
    height: 20px;
    background: #c9c9c9;
    margin: 0 8px;
}

.m-sep-tight {
    margin-left: 3px;
}

.m-rotate {
    width: 18px;
    height: 18px;
    margin-left: -1px;
    margin-right: -1px;
}

.m-phone {
    margin-left: 2px;
}

.m-txt {
    margin-left: 2px;
}

.m-phone + .m-txt {
    margin-left: 1px;
}

.chev {
    width: 6px;
    height: 6px;
    margin: -2px 8px 0 4px;
    border-right: 1px solid #8a8a8a;
    border-bottom: 1px solid #8a8a8a;
    transform: rotate(45deg);
}

.chev-far {
    margin-left: 12px;
}

.m-api {
    margin-left: 5px;
}

.m-theme {
    margin-left: 6px;
}

.m-globe {
    margin-left: 3px;
}

.m-warn {
    margin-left: auto;
    margin-right: 8px;
}

.main-tb2 {
    height: 29px;
    gap: 10px;
}

.main-tb2 .tb-sep {
    margin: 0 -3px 0 -1px;
}

.m-guide {
    margin-left: 3px;
}

.margin-box {
    width: 36px;
    height: 17px;
    margin: 0 -5px 0 -3px;
    line-height: 15px;
    text-align: center;
    border-bottom: 1px solid #333;
    background:
        linear-gradient(#333, #333) left bottom / 1px 5px no-repeat,
        linear-gradient(#333, #333) right bottom / 1px 5px no-repeat;
}

.canvas {
    position: relative;
    flex: 1;
    min-height: 0;
    display: flex;
    align-items: center;
    justify-content: center;
    gap: 9px;
    padding-top: 2px;
    background: #f5f5f5;
}

.surface {
    position: relative;
    width: 392px;
    height: 697px;
    display: flex;
    align-items: center;
    justify-content: center;
    background: #fafafa;
    font-family: Roboto, sans-serif;
    font-size: 14px;
    color: #808080;
}

.blueprint {
    background: #235d70;
    border: 1px solid #6cbfd4;
    font-family: "Liberation Sans", sans-serif;
}

.bp-text {
    width: 74px;
    height: 19px;
    line-height: 17px;
    font-size: 13px;
    text-align: center;
    white-space: nowrap;
    color: #7ab9ca;
    background: #2f6b80;
    border: 1px solid #6cc3da;
}

.resize {
    position: absolute;
    left: -7px;
    bottom: -21px;
}

.zoomctl {
    position: absolute;
    right: 13px;
    bottom: 19px;
    display: flex;
    flex-direction: column;
    gap: 4px;
}

.zoombox {
    width: 28px;
    padding: 7px 0;
    display: flex;
    flex-direction: column;
    align-items: center;
    gap: 9px;
    background: #f7f7f7;
    border: 1px solid #c4c4c4;
    border-radius: 4px;
}

.zoombox-hand {
    padding: 6px 0;
}

.one {
    font-size: 11px;
    font-weight: 700;
    line-height: 16px;
    color: #6e6e6e;
}

.attrs {
    width: 280px;
    flex: none;
    display: flex;
    flex-direction: column;
    background: #fdfdfd;
    border-left: 1px solid #c9c9c9;
}

.attrs-empty {
    margin-top: 386px;
    padding-left: 22px;
    text-align: center;
    color: #999;
    line-height: 18px;
    letter-spacing: .1px;
}

.attrs-empty p {
    margin: 0 0 14px;
}

.hstrip {
    height: 23px;
    flex: none;
}

/* bottom bars */
.toolbar-bottom {
    height: 22px;
    flex: none;
    display: flex;
    align-items: center;
    gap: 20px;
    padding: 2px 0 0 32px;
    border-bottom: 1px solid #9a9a9a;
}

.tw-btn {
    display: flex;
    align-items: center;
    gap: 4px;
}

.tw-btn .ic {
    width: 12px;
    height: 12px;
}

.tw-first {
    margin-right: -3px;
}

.event {
    margin-left: auto;
    margin-right: 32px;
}

.badge {
    width: 13px;
    height: 13px;
    line-height: 13px;
    font-size: 10px;
    text-align: center;
    border-radius: 50%;
    background: #f0a30a;
}

.statusbar {
    height: 21px;
    flex: none;
    display: flex;
    align-items: center;
    padding-left: 5px;
    border-bottom: 1px solid #111;
}

.status-msg {
    margin-left: 6px;
    letter-spacing: .04px;
}

.status-right {
    margin-left: auto;
    display: flex;
    align-items: center;
    gap: 12px;
    padding-right: 9px;
}

.status-right .ic {
    width: 14px;
    height: 14px;
}

.status-right .ic + .ic {
    margin-left: -2px;
}

.off {
    color: #aaa;
}

/* overlays */
.tooltip {
    position: absolute;
    left: 1773px;
    top: 53px;
    width: 96px;
    height: 29px;
    line-height: 27px;
    text-align: center;
    background: #f7f7f7;
    border: 1px solid #bdbdbd;
    border-radius: 4px;
    box-shadow: 0 4px 12px rgba(0, 0, 0, .25);
}

.tooltip::before {
    content: "";
    position: absolute;
    left: 41px;
    top: -6px;
    width: 10px;
    height: 10px;
    background: #f7f7f7;
    border-top: 1px solid #bdbdbd;
    border-left: 1px solid #bdbdbd;
    transform: rotate(45deg);
}

.redbox {
    position: absolute;
    left: 1692px;
    top: 16px;
    width: 201px;
    height: 109px;
    border: 5px solid #ed1c24;
}
```
